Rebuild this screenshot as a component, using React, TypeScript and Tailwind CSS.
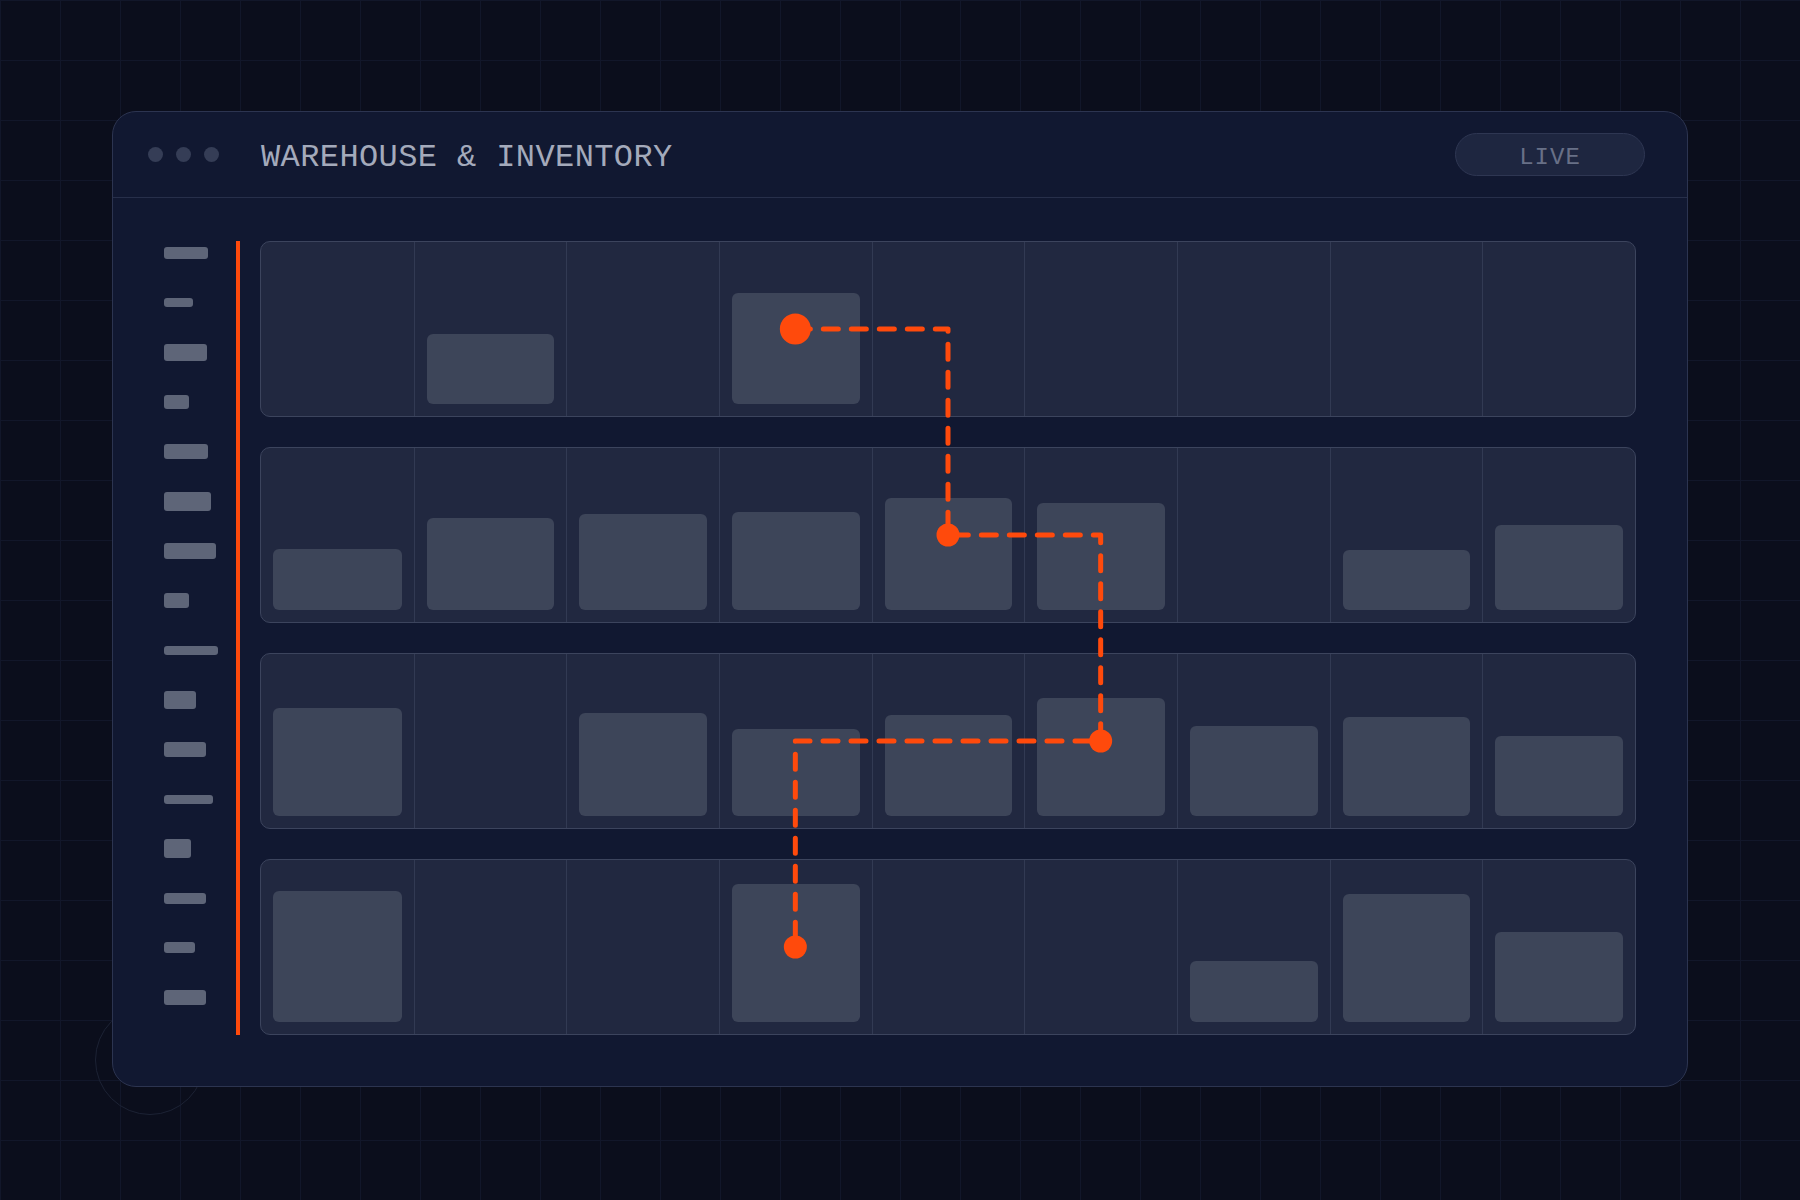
const racks: number[][] = [
  [0, 70, 0, 111, 0, 0, 0, 0, 0],
  [61, 92, 96, 98, 112, 107, 0, 60, 85],
  [108, 0, 103, 87, 101, 118, 90, 99, 80],
  [131, 0, 0, 138, 0, 0, 61, 128, 90],
];

// label stubs down the left edge, [width, height]
const labels: [number, number][] = [
  [44, 12], [29, 9], [43, 17], [25, 14], [44, 15], [47, 19], [52, 16], [25, 15],
  [54, 9], [32, 18], [42, 15], [49, 9], [27, 19], [42, 11], [31, 11], [42, 15],
];

const colX = (k: number) => 1 + (1374 / 9) * (k + 0.5);

function Route() {
  const x3 = colX(3);
  const x4 = colX(4);
  const x5 = colX(5);
  return (
    <svg
      className="pointer-events-none absolute inset-0"
      width={1376}
      height={794}
      viewBox="0 0 1376 794"
    >
      <path
        d={`M ${x3} 88 H ${x4} V 294 H ${x5} V 500 H ${x3} V 706`}
        fill="none"
        stroke="#ff4a0c"
        strokeWidth={5}
        strokeDasharray="15 13"
        strokeLinecap="round"
        strokeLinejoin="round"
      />
      <circle cx={x3} cy={88} r={15.5} fill="#ff4a0c" />
      <circle cx={x4} cy={294} r={11.5} fill="#ff4a0c" />
      <circle cx={x5} cy={500} r={11.5} fill="#ff4a0c" />
      <circle cx={x3} cy={706} r={11.5} fill="#ff4a0c" />
    </svg>
  );
}

export default function App() {
  return (
    <div className="relative h-[1200px] w-full overflow-hidden bg-[#0b0e1c] bg-[linear-gradient(to_right,#12172a_1px,transparent_1px),linear-gradient(to_bottom,#12172a_1px,transparent_1px)] bg-[size:60px_60px] pt-[111px]">
      <div className="absolute left-[95px] top-[1005px] h-[110px] w-[110px] rounded-full border-[1.5px] border-[#1c2234]" />

      <div className="relative mx-auto w-[1576px] rounded-[24px] border border-[#2c3450] bg-[#111831]">
        <div className="flex h-[86px] items-center border-b border-[#272f4a] pl-[35px] pr-[42px]">
          <div className="flex gap-[13px]">
            <span className="h-[15px] w-[15px] rounded-full bg-[#353d56]" />
            <span className="h-[15px] w-[15px] rounded-full bg-[#353d56]" />
            <span className="h-[15px] w-[15px] rounded-full bg-[#353d56]" />
          </div>
          <h1 className="ml-[42px] translate-y-[3px] font-['Liberation_Mono',monospace] text-[32px] tracking-[0.4px] text-[#a4aabb]">
            WAREHOUSE &amp; INVENTORY
          </h1>
          <div className="ml-auto flex h-[43px] w-[190px] items-center justify-center rounded-full border border-[#2e3652] bg-[#1e2640] font-['Liberation_Mono',monospace] text-[24px] tracking-[1px] text-[#687087]">
            <span className="translate-y-[3px]">LIVE</span>
          </div>
        </div>

        <div className="flex pb-[51px] pl-[51px] pr-[51px] pt-[43px]">
          <div className="w-[72px]">
            {labels.map(([w, h], i) => (
              <div key={i} className="h-[49.65px]">
                <div className="flex h-6 items-center">
                  <span
                    className="block rounded-[3px] bg-[#5e6578]"
                    style={{ width: w, height: h }}
                  />
                </div>
              </div>
            ))}
          </div>
          <div className="w-1 bg-[#ff4a0c]" />
          <div className="relative ml-5 flex w-[1376px] flex-col gap-[30px]">
            {racks.map((rack, r) => (
              <div
                key={r}
                className="grid h-[176px] grid-cols-9 overflow-hidden rounded-[10px] border border-[#3c445d] bg-[#212840]"
              >
                {rack.map((h, c) => (
                  <div
                    key={c}
                    className={`flex items-end px-3 pb-3 ${c > 0 ? "border-l border-[#323a53]" : ""}`}
                  >
                    {h > 0 && (
                      <div
                        className="w-full rounded-[6px] bg-[#3d4559]"
                        style={{ height: h }}
                      />
                    )}
                  </div>
                ))}
              </div>
            ))}
            <Route />
          </div>
        </div>
      </div>
    </div>
  );
}
